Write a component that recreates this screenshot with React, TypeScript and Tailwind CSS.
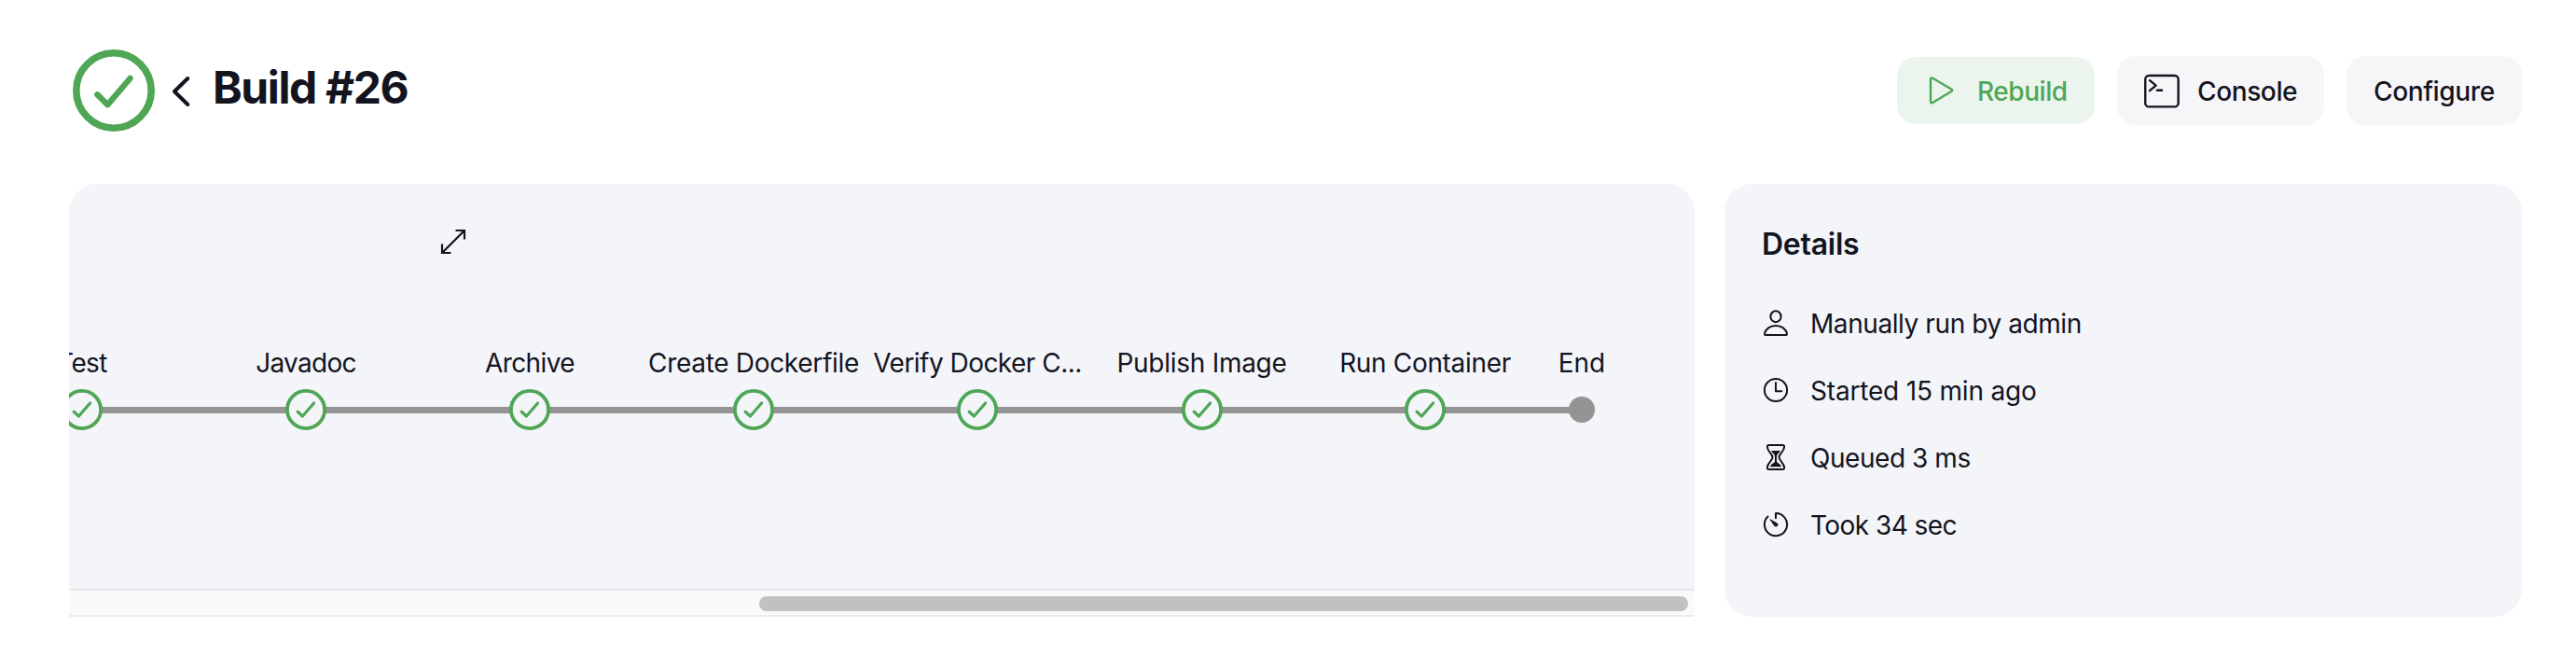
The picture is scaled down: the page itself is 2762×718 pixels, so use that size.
import React from "react";

type Stage = { name: string; x: number; tracking: string };

const stages: Stage[] = [
  { name: "Test", x: 88, tracking: "tracking-[-0.6px]" },
  { name: "Javadoc", x: 328, tracking: "tracking-[-0.7px]" },
  { name: "Archive", x: 568, tracking: "tracking-[-0.6px]" },
  { name: "Create Dockerfile", x: 808, tracking: "tracking-[-0.31px]" },
  { name: "Verify Docker C...", x: 1048, tracking: "tracking-[-0.53px]" },
  { name: "Publish Image", x: 1288.5, tracking: "tracking-[-0.27px]" },
  { name: "Run Container", x: 1528, tracking: "tracking-[-0.33px]" },
];

const PANEL_LEFT = 74;

function StatusIcon() {
  return (
    <svg width="88" height="88" viewBox="0 0 88 88" fill="none" stroke="#4fa655">
      <circle cx="44" cy="44" r="40.2" strokeWidth="7.6" />
      <path d="M26.3 48.3 37.3 59.3 61.5 31" strokeWidth="6.4" strokeLinecap="round" strokeLinejoin="round" />
    </svg>
  );
}

function StageIcon() {
  return (
    <svg width="44" height="44" viewBox="0 0 44 44" fill="none" stroke="#4fa655">
      <circle cx="22" cy="22" r="20.1" fill="#f3f5f9" strokeWidth="3.8" />
      <path d="M13.2 24.2 18.4 29 30.6 15" strokeWidth="3.2" strokeLinecap="round" strokeLinejoin="round" />
    </svg>
  );
}

function UserIcon() {
  return (
    <svg width="28" height="30" viewBox="0 0 28 30" fill="none" stroke="currentColor" strokeWidth="2" strokeLinejoin="round">
      <ellipse cx="14" cy="8.2" rx="5.6" ry="6" />
      <path d="M2.9 28Q1.9 28 2 26.6C3 21.5 8 18 14 18S25 21.5 26 26.6Q26.1 28 25.1 28Z" />
    </svg>
  );
}

function ClockIcon() {
  return (
    <svg width="28" height="28" viewBox="0 0 28 28" fill="none" stroke="currentColor" strokeWidth="2" strokeLinecap="round" strokeLinejoin="round">
      <circle cx="14" cy="14" r="12.1" />
      <path d="M14 6v9.3h6.3" />
    </svg>
  );
}

function HourglassIcon() {
  return (
    <svg width="28" height="30" viewBox="0 0 28 30" fill="none" stroke="currentColor" strokeWidth="2" strokeLinejoin="round">
      <path d="M6.8 2H21.2Q23.3 2 23.1 4C22.8 9.5 17.5 11 17.5 15S22.8 20.5 23.1 26Q23.3 28 21.2 28H6.8Q4.7 28 4.9 26C5.2 20.5 10.5 19 10.5 15S5.2 9.5 4.9 4Q4.7 2 6.8 2Z" />
      <path d="M9.1 8H18.9C18.6 9.8 15 11.2 15 14.5V19.8C15.3 21.2 19.8 22.4 19.9 25.2H8.1C8.2 22.4 12.7 21.2 13 19.8V14.5C13 11.2 9.4 9.8 9.1 8Z" fill="currentColor" stroke="none" />
    </svg>
  );
}

function TimerIcon() {
  return (
    <svg width="28" height="28" viewBox="0 0 28 28" fill="none" stroke="currentColor" strokeWidth="2" strokeLinecap="round" strokeLinejoin="round">
      <path d="M14 7.3V2A12.1 12.1 0 1 1 5.5 5.5" />
      <path d="M8.3 8.9 15.4 12.9A1.8 1.8 0 0 1 12.8 15.6Z" fill="currentColor" strokeWidth="0.9" />
    </svg>
  );
}

const details = [
  { text: "Manually run by admin", icon: <UserIcon />, tracking: "tracking-[-0.42px]" },
  { text: "Started 15 min ago", icon: <ClockIcon />, tracking: "tracking-[-0.18px]" },
  { text: "Queued 3 ms", icon: <HourglassIcon />, tracking: "tracking-[-0.45px]" },
  { text: "Took 34 sec", icon: <TimerIcon />, tracking: "tracking-[-0.55px]" },
];

function Header() {
  return (
    <header className="flex h-[88px] items-center">
      <StatusIcon />
      <svg className="mt-[2px] ml-[16px]" width="24" height="36" viewBox="0 0 24 36" fill="none" stroke="currentColor" strokeWidth="4" strokeLinecap="round" strokeLinejoin="round">
        <path d="M19.3 4 5 18 19.3 32" />
      </svg>
      <h1 className="mb-[7px] ml-[22px] text-[48px] leading-[60px] font-bold tracking-[-1.4px] whitespace-nowrap">Build #26</h1>
      <div className="ml-auto flex items-center gap-[24px] text-[28px] leading-[34px] font-medium">
        <button className="flex h-[72px] w-[212px] items-center rounded-[20px] bg-[#ebf5ee] pl-[33px] text-[#4fa655]">
          <svg width="28" height="32" viewBox="0 0 28 32" fill="none" stroke="currentColor" strokeWidth="2.4" strokeLinejoin="round">
            <path d="M3 4.5Q3 1.5 5.6 3L25.2 14.5Q27 15.8 25.2 17L5.6 28.8Q3 30.2 3 27.5Z" />
          </svg>
          <span className="ml-[25px] pt-[1px] tracking-[-0.45px]">Rebuild</span>
        </button>
        <button className="flex h-[74px] w-[222px] items-center rounded-[20px] bg-[#f6f6f9] pl-[28px]">
          <svg width="40" height="38" viewBox="0 0 40 38" fill="none" stroke="currentColor" strokeLinecap="round" strokeLinejoin="round">
            <rect x="2.2" y="3" width="35.4" height="33.4" rx="4" strokeWidth="2.4" />
            <path d="M7 8.2 13.6 13.7 7 19.2M14.800 18.800H20" strokeWidth="2.4" />
          </svg>
          <span className="ml-[18px] pt-[1px] tracking-[-0.38px]">Console</span>
        </button>
        <button className="flex h-[74px] w-[188px] items-center rounded-[20px] bg-[#f6f6f9] pl-[29px]">
          <span className="pt-[1px] tracking-[-0.36px]">Configure</span>
        </button>
      </div>
    </header>
  );
}

function StageGraph() {
  return (
    <section className="flex h-[464px] w-[1743px] flex-col rounded-[30px] bg-[#f3f5f9]">
      <div className="relative h-[434px] overflow-hidden">
        <svg className="absolute top-[47px] left-[397px]" width="30" height="30" viewBox="0 0 30 30" fill="none" stroke="currentColor" strokeWidth="2.2">
          <path d="M3.5 26.5 26.5 3.5M17.5 3H27V12.5M3 17.5V27H12.5" />
        </svg>
        <div className="absolute top-[238.5px] left-0 h-[7px] w-[1622px] bg-[#949494]" />
        {stages.map((s) => (
          <div key={s.name} className="absolute top-[174px] flex w-[240px] flex-col items-center" style={{ left: s.x - PANEL_LEFT - 120 }}>
            <span className={"h-[36px] text-[28px] leading-[36px] whitespace-nowrap " + s.tracking}>{s.name}</span>
            <span className="mt-[10px]">
              <StageIcon />
            </span>
          </div>
        ))}
        <div className="absolute top-[174px] left-[1562px] flex w-[120px] flex-col items-center">
          <span className="h-[36px] text-[28px] leading-[36px]">End</span>
          <span className="mt-[18px] size-[28px] rounded-full bg-[#949494]" />
        </div>
      </div>
      <div className="flex h-[30px] w-[1742px] items-center justify-end border-t-2 border-b-2 border-t-[#e6e6e8] border-b-[#ebebeb] bg-[#fafafa] pr-[6px]">
        <div className="mt-[2px] h-[16px] w-[996px] rounded-full bg-[#c1c1c1]" />
      </div>
    </section>
  );
}

function Details() {
  return (
    <section className="h-[464px] w-[855px] rounded-[30px] bg-[#f3f5f9] pt-[49px] pl-[40px]">
      <h2 className="text-[32px] leading-[32px] font-semibold tracking-[-0.26px]">Details</h2>
      <ul className="mt-[33px]">
        {details.map((d) => (
          <li key={d.text} className="flex h-[72px] items-center">
            <span className="mb-[2px] ml-[1px]">{d.icon}</span>
            <span className={"ml-[23px] text-[28px] leading-[36px] " + d.tracking}>{d.text}</span>
          </li>
        ))}
      </ul>
    </section>
  );
}

export default function App() {
  return (
    <main className="h-[718px] w-[2762px] overflow-hidden bg-white pt-[53px] pr-[58px] pl-[74px] font-[Inter,'Liberation_Sans',sans-serif] text-[#14141f] [&_svg]:block">
      <div className="pl-[4px]">
        <Header />
      </div>
      <div className="mt-[56px] flex gap-[32px]">
        <StageGraph />
        <Details />
      </div>
    </main>
  );
}
